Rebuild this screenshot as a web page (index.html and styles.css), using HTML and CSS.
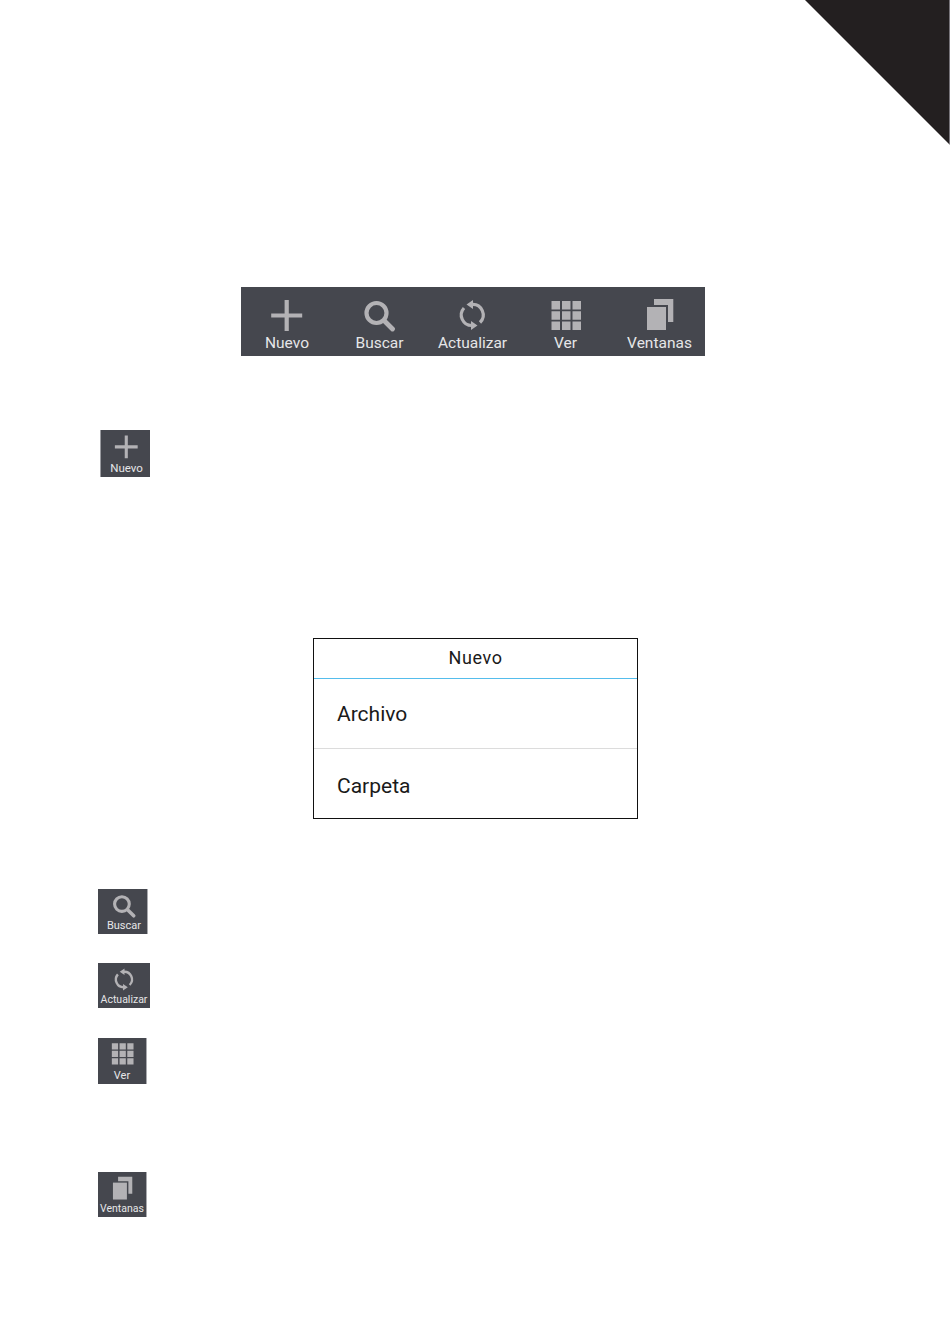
FILE: index.html
```html
<!DOCTYPE html>
<html lang="en">
<head>
    <title>Barra de herramientas</title>
    <meta charset="UTF-8">
    <meta name="viewport" content="width=device-width, initial-scale=1.0">
    <link rel="stylesheet" href="styles.css">
</head>
<body>
    <svg class="icon-defs" width="0" height="0" aria-hidden="true">
        <symbol id="i-plus" viewBox="0 0 34 34">
            <path d="M16.700 2v31M1.200 17.500h31" fill="none" stroke="currentColor" stroke-width="4.200"/>
        </symbol>
        <symbol id="i-search" viewBox="0 0 34 34">
            <circle cx="13.500" cy="15" r="10" fill="none" stroke="currentColor" stroke-width="4.200"/>
            <path d="M21.500 23l8 8" fill="none" stroke="currentColor" stroke-width="4.800" stroke-linecap="round"/>
        </symbol>
        <symbol id="i-refresh" viewBox="0 0 34 34">
            <path d="M16 6.500A10.500 10.500 0 0 1 24 24.500M16 27.500A10.500 10.500 0 0 1 8 10" fill="none" stroke="currentColor" stroke-width="3.200"/>
            <path d="M17 2l-6.500 4.500L17 11zM15 23l6.500 4.500L15 32z" fill="currentColor"/>
        </symbol>
        <symbol id="i-grid" viewBox="0 0 34 34">
            <path d="M2.500 3h8.500v8.500H2.500zM13 3h8.500v8.500H13zM23.500 3H32v8.500h-8.500zM2.500 13.200h8.500v8.500H2.500zM13 13.200h8.500v8.500H13zM23.500 13.200H32v8.500h-8.500zM2.500 23.500h8.500V32H2.500zM13 23.500h8.500V32H13zM23.500 23.500H32V32h-8.500z" fill="currentColor"/>
        </symbol>
        <symbol id="i-windows" viewBox="0 0 34 34">
            <path d="M11 1h19.300v23H25V7H11z" fill="currentColor"/>
            <path d="M4 9h19v23H4z" fill="currentColor"/>
        </symbol>
    </svg>

    <div class="corner"></div>

    <nav class="toolbar">
        <div class="tool"><svg class="tool-icon"><use href="#i-plus"/></svg><span>Nuevo</span></div>
        <div class="tool"><svg class="tool-icon"><use href="#i-search"/></svg><span>Buscar</span></div>
        <div class="tool"><svg class="tool-icon"><use href="#i-refresh"/></svg><span>Actualizar</span></div>
        <div class="tool"><svg class="tool-icon"><use href="#i-grid"/></svg><span>Ver</span></div>
        <div class="tool tool-last"><svg class="tool-icon"><use href="#i-windows"/></svg><span>Ventanas</span></div>
    </nav>

    <div class="tool small small-nuevo"><svg class="tool-icon"><use href="#i-plus"/></svg><span>Nuevo</span></div>

    <div class="dialog">
        <div class="dialog-title">Nuevo</div>
        <div class="dialog-row row-first">Archivo</div>
        <div class="dialog-row row-last">Carpeta</div>
    </div>

    <div class="tool small small-buscar"><svg class="tool-icon"><use href="#i-search"/></svg><span>Buscar</span></div>
    <div class="tool small small-actualizar"><svg class="tool-icon"><use href="#i-refresh"/></svg><span>Actualizar</span></div>
    <div class="tool small small-ver"><svg class="tool-icon"><use href="#i-grid"/></svg><span>Ver</span></div>
    <div class="tool small small-ventanas"><svg class="tool-icon"><use href="#i-windows"/></svg><span>Ventanas</span></div>
</body>
</html>
```

FILE: styles.css
```css
body {
    margin: 0;
    height: 1344px;
    overflow: hidden;
    position: relative;
    font-family: Roboto, sans-serif;
    background: #fff;
}

.icon-defs {
    display: block;
    height: 0;
}

.corner {
    position: absolute;
    top: 0;
    right: 0;
    width: 145px;
    height: 145px;
    background: linear-gradient(to left, #77747a 1px, #231f20 1px);
    clip-path: polygon(0 0, 100% 0, 100% 100%);
}

.toolbar {
    display: grid;
    grid-template-columns: 92px 93px 93px 93px 93px;
    width: 464px;
    height: 69px;
    margin: 287px 0 0 241px;
    background: #45474e;
}

.tool {
    display: flex;
    flex-direction: column;
    align-items: center;
    color: #b3b2b5;
    background: #45474e;
    padding-top: 11px;
    box-sizing: border-box;
}

.tool-last {
    padding-left: 2px;
}

.tool-icon {
    width: 34px;
    height: 34px;
    display: block;
}

.tool span {
    color: #e6e6e8;
    font-size: 15.500px;
    line-height: 18px;
    margin-top: 2px;
    white-space: nowrap;
}

.small {
    width: 50px;
    height: 45px;
    padding-top: 4px;
}

.small .tool-icon {
    width: 25px;
    height: 25px;
}

.small span {
    font-size: 11px;
    line-height: 13px;
    margin-top: 1px;
}

.small-nuevo {
    margin: 74px 0 0 100px;
    height: 47px;
    padding-left: 2px;
    border-left: 1px solid #9a9ba0;
}

.small-nuevo span {
    font-size: 11.500px;
    margin-top: 3px;
}

.small-buscar {
    margin: 70px 0 0 98px;
    padding-left: 3px;
    border-right: 1px solid #a9aaae;
}

.small-actualizar {
    margin: 29px 0 0 98px;
    width: 52px;
}

.small-actualizar span,
.small-ventanas span {
    font-size: 10.500px;
}

.small-ver {
    margin: 30px 0 0 98px;
    width: 49px;
    height: 46px;
    padding-top: 3px;
    border-right: 1px solid #a9aaae;
}

.small-ver span {
    margin-top: 3px;
}

.small-ventanas {
    margin: 88px 0 0 98px;
    width: 49px;
    border-right: 1px solid #a9aaae;
}

.dialog {
    width: 325px;
    height: 181px;
    margin: 161px 0 0 313px;
    box-sizing: border-box;
    border: 1px solid #111;
    color: #1a1a1a;
}

.dialog-title {
    height: 39px;
    line-height: 38px;
    text-align: center;
    font-size: 18px;
    letter-spacing: 0.6px;
    border-bottom: 1px solid #55bdec;
}

.dialog-row {
    height: 69px;
    line-height: 70px;
    padding-left: 23px;
    font-size: 21px;
}

.row-first {
    border-bottom: 1px solid #dcdcdc;
}

.row-last {
    line-height: 74px;
}
```
